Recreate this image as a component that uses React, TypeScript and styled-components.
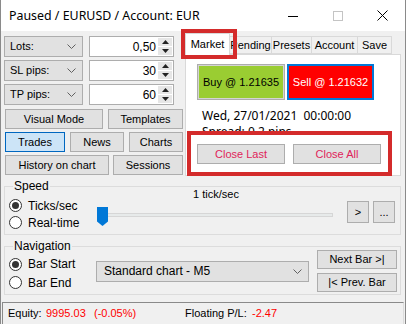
import React from 'react';
import styled, { createGlobalStyle } from 'styled-components';

const Global = createGlobalStyle`
  html, body { margin: 0; padding: 0; background: #f0f0f0; }
  body { font-family: "Liberation Sans", Arial, sans-serif; font-size: 11px; color: #000; }
  * { box-sizing: border-box; }
`;

const Window = styled.div`
  width: 406px;
  height: 324px;
  display: flex;
  flex-direction: column;
  background: #f0f0f0;
  border-left: 1px solid #8a8a8a;
  border-right: 1px solid #8a8a8a;
  overflow: hidden;
`;

const TitleBar = styled.div`
  height: 31px;
  flex-shrink: 0;
  background: #fff;
  display: flex;
  align-items: center;
  padding-left: 8px;
`;

const TitleText = styled.div`
  font-family: "Noto Sans", "Liberation Sans", sans-serif;
  font-size: 12.4px;
  line-height: 16px;
  padding-top: 1px;
`;

const Caption = styled.div`
  margin-left: auto;
  display: flex;
  height: 31px;
`;

const CaptionBtn = styled.div`
  width: 45px;
  height: 31px;
  display: flex;
  align-items: center;
  justify-content: center;
`;

const Main = styled.div`
  display: flex;
  padding: 2px 0 0 3px;
`;

const LeftCol = styled.div`
  width: 180px;
  display: flex;
  flex-direction: column;
  padding-top: 3px;
`;

const InputRow = styled.div`
  display: flex;
  gap: 6px;
  height: 21px;
  margin-bottom: 3px;
`;

const Combo = styled.div<{ $w: number }>`
  width: ${p => p.$w}px;
  height: 100%;
  background: #e1e1e1;
  border: 1px solid #adadad;
  display: flex;
  align-items: center;
  justify-content: space-between;
  padding: 0 6px 0 5px;
  line-height: 13px;
`;

const Numeric = styled.div`
  width: 85px;
  height: 100%;
  background: #fff;
  border: 1px solid #adadad;
  display: flex;
  align-items: center;
  padding-right: 1px;
  font-size: 12px;
`;

const NumValue = styled.div`
  flex: 1;
  text-align: right;
  padding-right: 2px;
`;

const Spinner = styled.div`
  width: 14px;
  height: 17px;
  display: flex;
  flex-direction: column;
  gap: 1px;
`;

const SpinHalf = styled.div`
  flex: 1;
  background: #e6e6e6;
  display: flex;
  align-items: center;
  justify-content: center;
`;

const BtnRow = styled.div<{ $gap?: number }>`
  display: flex;
  gap: ${p => p.$gap ?? 5}px;
  padding-left: 1px;
  margin-top: 1px;
  margin-bottom: 2px;
`;

const Btn = styled.button<{ $w: number; $h?: number; $active?: boolean; $color?: string }>`
  width: ${p => p.$w}px;
  height: ${p => p.$h ?? 20}px;
  background: ${p => (p.$active ? '#cce4f7' : '#e1e1e1')};
  border: 1px solid ${p => (p.$active ? '#0067c0' : '#adadad')};
  color: ${p => p.$color ?? '#000'};
  font-family: inherit;
  font-size: 11px;
  line-height: 13px;
  padding: 0;
  margin: 0;
  display: flex;
  align-items: center;
  justify-content: center;
  flex-shrink: 0;
  white-space: nowrap;
`;

const TabControl = styled.div`
  margin-left: 1px;
  width: 216px;
  position: relative;
  display: flex;
  flex-direction: column;
`;

const TabStrip = styled.div`
  height: 21px;
  display: flex;
  align-items: flex-end;
  position: relative;
  z-index: 1;
`;

const Tab = styled.div<{ $w: number; $active?: boolean }>`
  width: ${p => p.$w}px;
  height: ${p => (p.$active ? 22 : 18)}px;
  margin-bottom: ${p => (p.$active ? -1 : 0)}px;
  margin-left: -1px;
  &:first-child { margin-left: 0; }
  background: ${p => (p.$active ? '#fff' : '#f0f0f0')};
  border: 1px solid #d9d9d9;
  border-bottom: ${p => (p.$active ? 'none' : '1px solid #d9d9d9')};
  display: flex;
  align-items: ${p => (p.$active ? 'flex-start' : 'center')};
  padding-top: ${p => (p.$active ? 4 : 0)}px;
  justify-content: center;
  line-height: 13px;
  white-space: nowrap;
`;

const Panel = styled.div`
  height: 122px;
  background: #fff;
  border: 1px solid #d9d9d9;
  padding: 9px 0 0 11px;
  display: flex;
  flex-direction: column;
`;

const TradeRow = styled.div`
  display: flex;
  gap: 2px;
`;

const BuyBtn = styled.div`
  width: 88px;
  height: 36px;
  background: #9acd32;
  border: 1px solid #adadad;
  box-shadow: inset 0 0 0 1px #d4d4d4;
  display: flex;
  align-items: center;
  justify-content: center;
`;

const SellBtn = styled.div`
  width: 87px;
  height: 36px;
  background: #ff0000;
  border: 2px solid #0078d7;
  color: #fff;
  display: flex;
  align-items: center;
  justify-content: center;
`;

const InfoLine = styled.div<{ $clip?: boolean }>`
  font-family: "Noto Sans", "Liberation Sans", sans-serif;
  font-size: 12px;
  padding-left: 5px;
  line-height: 15px;
  height: ${p => (p.$clip ? '8px' : '15px')};
  overflow: hidden;
  white-space: pre;
`;

const DateLine = styled(InfoLine)`
  margin-top: 8px;
`;

const SpreadLine = styled(InfoLine)`
  margin-top: 1px;
`;

const CloseRow = styled.div`
  display: flex;
  gap: 8px;
  margin-top: 12px;
`;

const Annot = styled.div`
  position: absolute;
  border: 4px solid #d42b2b;
  pointer-events: none;
  z-index: 3;
`;

const TabAnnot = styled(Annot)`
  left: -4px;
  top: -4px;
  width: 56px;
  height: 30px;
`;

const CloseAnnot = styled(Annot)`
  left: 2px;
  top: 98px;
  width: 205px;
  height: 45px;
`;

const Group = styled.div<{ $mt: number; $h: number }>`
  margin: ${p => p.$mt}px 4px 0 3px;
  height: ${p => p.$h}px;
  border: 1px solid #dcdcdc;
  position: relative;
  display: flex;
`;

const Legend = styled.div`
  position: absolute;
  left: 8px;
  top: -8px;
  background: #f0f0f0;
  padding: 0 1px;
  line-height: 14px;
  font-size: 12px;
`;

const RadioCol = styled.div<{ $pt: number }>`
  width: 91px;
  padding: ${p => p.$pt}px 0 0 4px;
  display: flex;
  flex-direction: column;
  flex-shrink: 0;
`;

const RadioRow = styled.div<{ $h: number }>`
  display: flex;
  align-items: center;
  gap: 6px;
  height: ${p => p.$h}px;
  line-height: 14px;
  font-size: 12px;
`;

const RadioCircle = styled.span<{ $checked?: boolean }>`
  width: 13px;
  height: 13px;
  border-radius: 50%;
  border: 1px solid #333;
  background: #fff;
  display: inline-flex;
  align-items: center;
  justify-content: center;
  flex-shrink: 0;
  &::after {
    content: '';
    width: 7px;
    height: 7px;
    border-radius: 50%;
    background: #333;
    display: ${p => (p.$checked ? 'block' : 'none')};
  }
`;

const SliderCol = styled.div`
  width: 240px;
  display: flex;
  flex-direction: column;
`;

const SpeedLabel = styled.div`
  text-align: center;
  line-height: 14px;
  margin-bottom: 6px;
`;

const Slider = styled.div`
  position: relative;
  height: 20px;
  margin-left: 1px;
  width: 236px;
`;

const Track = styled.div`
  position: absolute;
  left: 0;
  right: 0;
  top: 6px;
  height: 4px;
  background: #e7eaea;
  border: 1px solid #d6d6d6;
`;

const Thumb = styled.svg`
  position: absolute;
  left: 0;
  top: 0;
`;

const SpeedBtns = styled.div`
  display: flex;
  gap: 4px;
  margin: 14px 0 0 11px;
`;

const NavCombo = styled(Combo)`
  height: 21px;
  margin-top: 14px;
  padding: 0 6px 0 7px;
  font-size: 12px;
`;

const NavBtns = styled.div`
  display: flex;
  flex-direction: column;
  gap: 4px;
  margin: 3px 0 0 8px;
`;

const StatusBar = styled.div`
  margin: 7px 1px 0 1px;
  flex: 1;
  border-top: 1px solid #8a8a8a;
  border-left: 1px solid #8a8a8a;
  border-right: 1px solid #dcdcdc;
  display: flex;
  align-items: flex-start;
  padding: 3px 0 0 5px;
  line-height: 14px;
  white-space: pre;
`;

const Cell = styled.span<{ $w?: number; $red?: boolean }>`
  display: inline-block;
  flex-shrink: 0;
  width: ${p => (p.$w ? `${p.$w}px` : 'auto')};
  color: ${p => (p.$red ? '#ff0000' : '#000')};
`;

const Chevron = () => (
  <svg width="9" height="5" viewBox="0 0 9 5">
    <polyline points="0.5,0.5 4.5,4.5 8.5,0.5" fill="none" stroke="#606060" strokeWidth="1" />
  </svg>
);

const Up = () => (
  <svg width="7" height="4" viewBox="0 0 7 4"><polygon points="0,4 3.5,0 7,4" fill="#222" /></svg>
);
const Down = () => (
  <svg width="7" height="4" viewBox="0 0 7 4"><polygon points="0,0 3.5,4 7,0" fill="#222" /></svg>
);

const InputPair = ({ label, value }: { label: string; value: string }) => (
  <InputRow>
    <Combo $w={79}>
      <span>{label}</span>
      <Chevron />
    </Combo>
    <Numeric>
      <NumValue>{value}</NumValue>
      <Spinner>
        <SpinHalf><Up /></SpinHalf>
        <SpinHalf><Down /></SpinHalf>
      </Spinner>
    </Numeric>
  </InputRow>
);

export default function App() {
  return (
    <>
      <Global />
      <Window>
        <TitleBar>
          <TitleText>Paused / EURUSD / Account: EUR</TitleText>
          <Caption>
            <CaptionBtn>
              <svg width="10" height="10" viewBox="0 0 10 10"><line x1="0" y1="5.5" x2="10" y2="5.5" stroke="#000" strokeWidth="1" /></svg>
            </CaptionBtn>
            <CaptionBtn>
              <svg width="10" height="10" viewBox="0 0 10 10"><rect x="0.5" y="0.5" width="9" height="9" fill="none" stroke="#c4c4c4" strokeWidth="1" /></svg>
            </CaptionBtn>
            <CaptionBtn>
              <svg width="11" height="11" viewBox="0 0 11 11"><path d="M0.5 0.5 L10.5 10.5 M10.5 0.5 L0.5 10.5" stroke="#000" strokeWidth="1" /></svg>
            </CaptionBtn>
          </Caption>
        </TitleBar>

        <Main>
          <LeftCol>
            <InputPair label="Lots:" value="0,50" />
            <InputPair label="SL pips:" value="30" />
            <InputPair label="TP pips:" value="60" />
            <BtnRow>
              <Btn $w={98}>Visual Mode</Btn>
              <Btn $w={75}>Templates</Btn>
            </BtnRow>
            <BtnRow>
              <Btn $w={60} $active>Trades</Btn>
              <Btn $w={54}>News</Btn>
              <Btn $w={54}>Charts</Btn>
            </BtnRow>
            <BtnRow $gap={4}>
              <Btn $w={104}>History on chart</Btn>
              <Btn $w={70}>Sessions</Btn>
            </BtnRow>
          </LeftCol>

          <TabControl>
            <TabStrip>
              <Tab $w={45} $active>Market</Tab>
              <Tab $w={43}>Pending</Tab>
              <Tab $w={41}>Presets</Tab>
              <Tab $w={47}>Account</Tab>
              <Tab $w={35}>Save</Tab>
            </TabStrip>
            <Panel>
              <TradeRow>
                <BuyBtn>Buy @ 1.21635</BuyBtn>
                <SellBtn>Sell @ 1.21632</SellBtn>
              </TradeRow>
              <DateLine>{'Wed, 27/01/2021  00:00:00'}</DateLine>
              <SpreadLine $clip>Spread: 0.2 pips</SpreadLine>
              <CloseRow>
                <Btn $w={88} $color="#e0245a">Close Last</Btn>
                <Btn $w={88} $color="#e0245a">Close All</Btn>
              </CloseRow>
            </Panel>
            <TabAnnot />
            <CloseAnnot />
          </TabControl>
        </Main>

        <Group $mt={9} $h={49}>
          <Legend>Speed</Legend>
          <RadioCol $pt={10}>
            <RadioRow $h={17}><RadioCircle $checked />Ticks/sec</RadioRow>
            <RadioRow $h={17}><RadioCircle />Real-time</RadioRow>
          </RadioCol>
          <SliderCol>
            <SpeedLabel>1 tick/sec</SpeedLabel>
            <Slider>
              <Track />
              <Thumb width="11" height="19" viewBox="0 0 11 19">
                <path d="M0 0 H11 V14.5 L5.5 19 L0 14.5 Z" fill="#0078d7" />
              </Thumb>
            </Slider>
          </SliderCol>
          <SpeedBtns>
            <Btn $w={22} $h={22}>&gt;</Btn>
            <Btn $w={22} $h={22}>...</Btn>
          </SpeedBtns>
        </Group>

        <Group $mt={11} $h={49}>
          <Legend>Navigation</Legend>
          <RadioCol $pt={8}>
            <RadioRow $h={18}><RadioCircle $checked />Bar Start</RadioRow>
            <RadioRow $h={19}><RadioCircle />Bar End</RadioRow>
          </RadioCol>
          <NavCombo $w={213}>
            <span>Standard chart - M5</span>
            <Chevron />
          </NavCombo>
          <NavBtns>
            <Btn $w={80} $h={19}>Next Bar &gt;|</Btn>
            <Btn $w={80} $h={19}>|&lt; Prev. Bar</Btn>
          </NavBtns>
        </Group>

        <StatusBar>
          <Cell $w={38}>Equity:</Cell>
          <Cell $w={48} $red>9995.03</Cell>
          <Cell $w={91} $red>(-0.05%)</Cell>
          <Cell $w={67}>Floating P/L:</Cell>
          <Cell $red>-2.47</Cell>
        </StatusBar>
      </Window>
    </>
  );
}
